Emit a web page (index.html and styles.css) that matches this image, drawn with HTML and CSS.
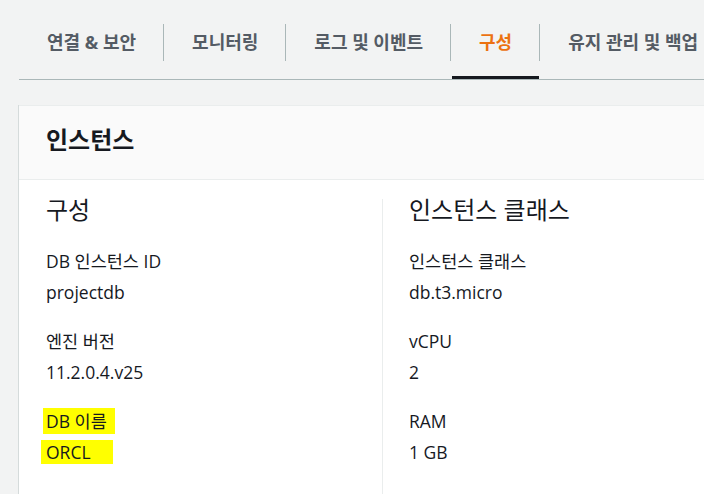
FILE: index.html
```html
<!DOCTYPE html>
<html lang="ko">
<head>
    <meta charset="UTF-8">
    <title>인스턴스 구성</title>
    <link rel="stylesheet" href="styles.css">
</head>
<body>

    <!-- Tabs -->
    <div class="tabs">
        <div class="tab"><span class="tab-label">연결 &amp; 보안</span></div>
        <div class="tab"><span class="tab-label">모니터링</span></div>
        <div class="tab"><span class="tab-label">로그 및 이벤트</span></div>
        <div class="tab active"><span class="tab-label">구성</span></div>
        <div class="tab"><span class="tab-label">유지 관리 및 백업</span></div>
    </div>

    <!-- Instance card -->
    <div class="card">
        <div class="card-header">인스턴스</div>
        <div class="card-body">
            <div class="column">
                <h3>구성</h3>
                <div class="field">
                    <div class="label">DB 인스턴스 ID</div>
                    <div class="value">projectdb</div>
                </div>
                <div class="field">
                    <div class="label">엔진 버전</div>
                    <div class="value">11.2.0.4.v25</div>
                </div>
                <div class="field">
                    <div class="label"><span class="marker">DB 이름</span></div>
                    <div class="value"><span class="marker marker-2">ORCL</span></div>
                </div>
            </div>
            <div class="column">
                <h3>인스턴스 클래스</h3>
                <div class="field">
                    <div class="label">인스턴스 클래스</div>
                    <div class="value">db.t3.micro</div>
                </div>
                <div class="field">
                    <div class="label">vCPU</div>
                    <div class="value">2</div>
                </div>
                <div class="field">
                    <div class="label">RAM</div>
                    <div class="value">1 GB</div>
                </div>
            </div>
            <div class="column"></div>
        </div>
    </div>

</body>
</html>
```

FILE: styles.css
```css
* {
    margin: 0;
    padding: 0;
    box-sizing: border-box;
}

body {
    font-family: 'Open Sans', 'Noto Sans CJK KR', sans-serif;
    background-color: #f2f3f3;
    color: #16191f;
    overflow: hidden;
    width: 704px;
    height: 494px;
}

/* Tabs */
.tabs {
    display: flex;
    margin-left: 19px;
    width: 1100px;
    border-bottom: 1px solid #aab7b8;
    padding-top: 24px;
}

.tab {
    display: flex;
    flex-direction: column;
    flex-shrink: 0;
}

.tab-label {
    display: block;
    padding: 0 27px 0 28px;
    line-height: 37px;
    font-size: 18px;
    font-weight: bold;
    color: #545b64;
    margin-bottom: 15px;
    white-space: nowrap;
}

.tab + .tab .tab-label {
    border-left: 1px solid #aab7b8;
}

/* Active tab underline */
.tab::after {
    content: "";
    display: block;
    height: 3px;
    margin-left: 2px;
}

.tab.active .tab-label {
    color: #ec7211;
}

.tab.active::after {
    background-color: #16191f;
}

/* Card */
.card {
    margin: 25px 0 0 19px;
    width: 1100px;
    background-color: #fff;
    box-shadow: -1px 0 0 #d5dbdb, 0 1px 1px rgba(0, 28, 36, 0.2);
    border-top: 1px solid #eaeded;
    height: 400px;
}

.card-header {
    background-color: #fafafa;
    border-bottom: 1px solid #eaeded;
    height: 74px;
    line-height: 68px;
    padding-left: 27px;
    font-size: 24px;
    font-weight: bold;
}

.card-body {
    display: grid;
    grid-template-columns: 363px 363px 363px;
}

.column {
    margin-top: 19px;
    padding: 0 27px;
    min-height: 300px;
}

.column + .column {
    border-left: 1px solid #eaeded;
    padding-left: 26px;
}

.column h3 {
    font-size: 24px;
    font-weight: normal;
    line-height: 22px;
    margin-bottom: 25px;
}

.field {
    margin-bottom: 18px;
}

.label,
.value {
    font-size: 17.5px;
    line-height: 31px;
}

/* Yellow highlighter marks */
.marker {
    display: inline-block;
    background-color: #ffff00;
    width: 72px;
    line-height: 26px;
    margin-left: -3px;
    padding-left: 3px;
}

.marker-2 {
    line-height: 24px;
    margin-left: -5px;
    padding-left: 5px;
}
```
